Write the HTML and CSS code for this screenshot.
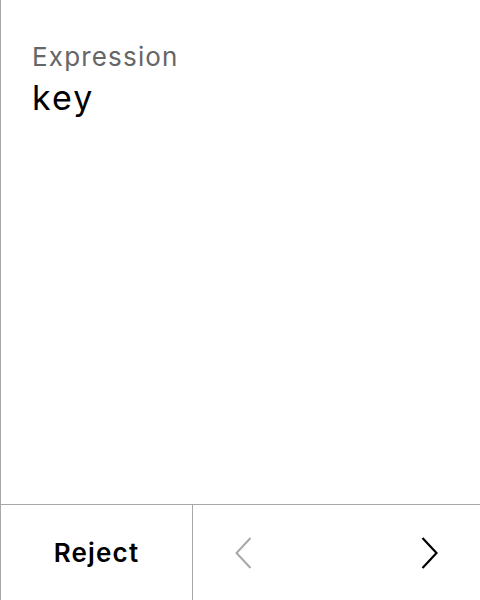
FILE: index.html
```html
<!DOCTYPE html>
<html>
<head>
<meta charset="utf-8">
<link rel="stylesheet" href="styles.css">
</head>
<body>
<div class="app">
  <main class="content">
    <div class="label">Expression</div>
    <div class="value">key</div>
  </main>
  <footer class="bar">
    <button class="reject">Reject</button>
    <div class="nav">
      <button class="arrow prev" aria-label="Previous">
        <svg width="18" height="32" viewBox="0 0 18 32"><path d="M16.5 1 L2.5 16 L16.5 31" fill="none" stroke="#a8a8a8" stroke-width="2"/></svg>
      </button>
      <button class="arrow next" aria-label="Next">
        <svg width="18" height="32" viewBox="0 0 18 32"><path d="M1.5 1 L15.5 16 L1.5 31" fill="none" stroke="#000" stroke-width="2.2"/></svg>
      </button>
    </div>
  </footer>
</div>
</body>
</html>
```
FILE: styles.css
```css
html, body {
  margin: 0;
  padding: 0;
  background: #fff;
}
body {
  font-family: Inter, "Noto Sans", sans-serif;
}
.app {
  width: 480px;
  height: 600px;
  box-sizing: border-box;
  border-left: 1px solid #a8a8a8;
  display: flex;
  flex-direction: column;
}
.content {
  flex: 1;
  padding: 40px 0 0 31px;
}
.label {
  font-size: 26px;
  color: #666;
  line-height: 33px;
  letter-spacing: 0.045em;
}
.value {
  font-size: 34px;
  color: #000;
  line-height: 49px;
  letter-spacing: 0.06em;
}
.bar {
  height: 96px;
  box-sizing: border-box;
  border-top: 1px solid #a8a8a8;
  display: flex;
}
button {
  background: none;
  border: 0;
  padding: 0;
  margin: 0;
  font-family: inherit;
  cursor: pointer;
}
.reject {
  width: 192px;
  box-sizing: border-box;
  border-right: 1px solid #a8a8a8;
  font-size: 26px;
  font-weight: 600;
  letter-spacing: 0.045em;
  color: #000;
}
.nav {
  flex: 1;
  display: flex;
  justify-content: space-between;
  align-items: center;
  padding: 0 41px 0 41px;
}
.arrow {
  display: flex;
}
```
